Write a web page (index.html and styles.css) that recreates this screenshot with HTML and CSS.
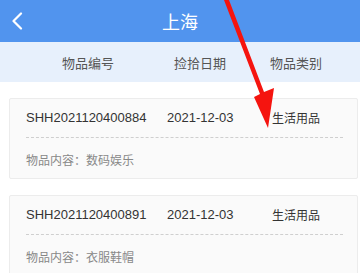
FILE: index.html
```html
<!DOCTYPE html>
<html lang="zh-CN">
<head>
<meta charset="utf-8">
<link rel="stylesheet" href="styles.css">
</head>
<body>
<div class="page">
  <header class="topbar">
    <span class="back">
      <svg width="12" height="18" viewBox="0 0 12 18"><polyline points="10,1.5 2.5,9 10,16.5" fill="none" stroke="#fff" stroke-width="2.2" stroke-linecap="round" stroke-linejoin="round"/></svg>
    </span>
    <h1 class="title">上海</h1>
  </header>
  <div class="colhead">
    <span>物品编号</span>
    <span>捡拾日期</span>
    <span>物品类别</span>
  </div>
  <div class="list">
    <div class="card">
      <div class="row">
        <span>SHH2021120400884</span>
        <span>2021-12-03</span>
        <span class="cjk">生活用品</span>
      </div>
      <div class="content">物品内容：数码娱乐</div>
    </div>
    <div class="card">
      <div class="row">
        <span>SHH2021120400891</span>
        <span>2021-12-03</span>
        <span class="cjk">生活用品</span>
      </div>
      <div class="content">物品内容：衣服鞋帽</div>
    </div>
  </div>
  <svg class="arrow" width="360" height="273" viewBox="0 0 360 273">
    <polygon points="224,0 229,0 264,92 274,88 268,128 254,97 260,94" fill="#f5140f"/>
  </svg>
</div>
</body>
</html>
```

FILE: styles.css
```css
html, body {
  margin: 0;
  padding: 0;
  background: #ffffff;
}
body {
  font-family: "Liberation Sans", "Noto Sans CJK SC", sans-serif;
  font-size: 13px;
  color: #333;
  width: 360px;
  height: 273px;
  overflow: hidden;
}
.page {
  position: relative;
  width: 360px;
  height: 273px;
  overflow: hidden;
}
.topbar {
  height: 42px;
  background: #5194ee;
  display: flex;
  align-items: center;
  justify-content: center;
  position: relative;
}
.back {
  position: absolute;
  left: 11px;
  top: 12px;
  display: flex;
}
.title {
  margin: 0;
  font-family: "Noto Sans CJK SC", sans-serif;
  font-weight: 400;
  font-size: 18px;
  color: #fff;
  line-height: 42px;
}
.colhead {
  height: 40px;
  background: #e7f0fc;
  display: grid;
  grid-template-columns: 112px 96px auto;
  align-items: center;
  padding-left: 62px;
  font-family: "Noto Sans CJK SC", sans-serif;
  color: #555;
  font-size: 13px;
}
.list {
  padding-top: 16px;
}
.card {
  margin: 0 2px 16px 9px;
  background: #fafafa;
  border: 1px solid #ececec;
  border-radius: 2px;
  padding: 0 14px 0 16px;
}
.row {
  display: grid;
  grid-template-columns: 141px 105px auto;
  align-items: center;
  height: 17px;
  line-height: 17px;
  padding: 10px 0 11px;
  border-bottom: 1px dashed #cfcfcf;
  color: #333;
}
.cjk {
  font-family: "Noto Sans CJK SC", sans-serif;
  font-size: 12px;
}
.content {
  font-family: "Noto Sans CJK SC", sans-serif;
  font-size: 12px;
  color: #888;
  line-height: 17px;
  padding: 13px 0 10px;
}
.arrow {
  position: absolute;
  left: 0;
  top: 0;
  pointer-events: none;
}
```
